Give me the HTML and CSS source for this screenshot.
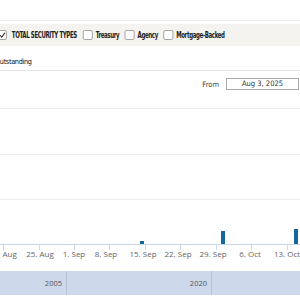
FILE: index.html
```html
<!DOCTYPE html>
<html lang="en">
<head>
    <meta charset="UTF-8">
    <title>Outstanding</title>
    <link rel="stylesheet" href="styles.css">
</head>
<body>
    <div class="topbar"></div>
    <div class="filters">
        <div class="filters-row">
            <label class="opt opt-first"><span class="box"><svg width="10" height="8" viewBox="0 0 10 8"><path d="M2 4.2 L4.3 6.2 L8.5 1.8" fill="none" stroke="#333" stroke-width="1.3"/></svg></span>TOTAL SECURITY TYPES</label>
            <label class="opt"><span class="box"></span>Treasury</label>
            <label class="opt"><span class="box"></span>Agency</label>
            <label class="opt"><span class="box"></span>Mortgage-Backed</label>
        </div>
    </div>
    <div class="title">Outstanding</div>
    <div class="range">
        <span class="range-label">From</span>
        <span class="range-input">Aug 3, 2025</span>
    </div>
    <svg class="chart" width="300" height="170" viewBox="0 0 300 170">
        <g stroke="#ececec" stroke-width="1">
            <line x1="0" y1="16.5" x2="300" y2="16.5"/>
            <line x1="0" y1="62.5" x2="300" y2="62.5"/>
            <line x1="0" y1="107.5" x2="300" y2="107.5"/>
        </g>
        <line x1="0" y1="152.5" x2="300" y2="152.5" stroke="#ccd6eb"/>
        <g stroke="#ccd6eb">
            <line x1="3.5" y1="152" x2="3.5" y2="158"/>
            <line x1="39.5" y1="152" x2="39.5" y2="158"/>
            <line x1="74.5" y1="152" x2="74.5" y2="158"/>
            <line x1="109.5" y1="152" x2="109.5" y2="158"/>
            <line x1="145.5" y1="152" x2="145.5" y2="158"/>
            <line x1="180.5" y1="152" x2="180.5" y2="158"/>
            <line x1="216.5" y1="152" x2="216.5" y2="158"/>
            <line x1="251.5" y1="152" x2="251.5" y2="158"/>
            <line x1="287.5" y1="152" x2="287.5" y2="158"/>
        </g>
        <g fill="#14689c">
            <rect x="140" y="149" width="4" height="3"/>
            <rect x="221" y="139" width="4" height="13"/>
            <rect x="294" y="137" width="4" height="15"/>
        </g>
        <g class="axis-label" text-anchor="middle">
            <text x="3" y="165">18. Aug</text>
            <text x="40" y="165">25. Aug</text>
            <text x="74" y="165">1. Sep</text>
            <text x="106" y="165">8. Sep</text>
            <text x="143" y="165">15. Sep</text>
            <text x="178" y="165">22. Sep</text>
            <text x="213" y="165">29. Sep</text>
            <text x="250" y="165">6. Oct</text>
            <text x="287" y="165">13. Oct</text>
        </g>
    </svg>
    <div class="navigator">
        <div class="nav-cell nav-a">2005</div>
        <div class="nav-cell nav-b">2020</div>
        <div class="nav-cell nav-c"></div>
    </div>
</body>
</html>
```
FILE: styles.css
```css
body {
    margin: 0;
    width: 300px;
    height: 300px;
    overflow: hidden;
    background: #fff;
    font-family: 'Open Sans', sans-serif;
}
.topbar {
    height: 20px;
    border-bottom: 1px solid #ececec;
}
.filters {
    margin-top: 3px;
    height: 22px;
    background: #f5f3f0;
    display: flex;
    align-items: center;
    overflow: hidden;
}
/* the labels use a narrow face, squeeze the row to get it */
.filters-row {
    display: flex;
    align-items: center;
    white-space: nowrap;
    transform: scaleX(0.76);
    transform-origin: 0 50%;
    font-family: 'DejaVu Sans Condensed', 'Liberation Sans Narrow', sans-serif;
    font-weight: bold;
    font-size: 8px;
    letter-spacing: -0.5px;
    color: #222;
}
.opt {
    display: flex;
    align-items: center;
    margin-right: 7.2px;
}
.opt-first {
    margin-left: -4px;
    margin-right: 7.9px;
}
.box {
    width: 11px;
    height: 8px;
    border: 1px solid #999;
    border-radius: 2px;
    background: #fff;
    margin-right: 3.9px;
    display: flex;
    align-items: center;
    justify-content: center;
}
.opt-first .box {
    margin-right: 6.6px;
}
.title {
    padding: 10px 0 2px;
    line-height: 12px;
    height: 12px;
    text-indent: -5px;
    white-space: nowrap;
    font-family: 'DejaVu Sans Condensed', sans-serif;
    font-size: 7.3px;
    letter-spacing: -0.35px;
    color: #111;
    border-bottom: 1px solid #e6e6e6;
}
.range {
    margin-top: 7px;
    height: 12px;
    display: flex;
    justify-content: flex-end;
    align-items: center;
    padding-right: 1px;
    font-family: 'DejaVu Sans Condensed', sans-serif;
    font-size: 7.5px;
    color: #444;
}
.range-label {
    margin-right: 7px;
}
.range-input {
    width: 71px;
    height: 10px;
    line-height: 10px;
    border: 1px solid #aaa;
    text-align: center;
    color: #333;
}
.chart {
    display: block;
    margin-top: 2px;
}
.axis-label {
    font-family: 'Open Sans', sans-serif;
    font-size: 8px;
    fill: #666;
}
.navigator {
    margin-top: 9px;
    height: 24px;
    background: #cdd8ea;
    display: flex;
    font-size: 7.5px;
    color: #555;
}
.nav-cell {
    line-height: 24px;
    text-align: right;
    padding-right: 4px;
    border-right: 1px solid #b6c3da;
}
.nav-a {
    width: 62px;
}
.nav-b {
    width: 140px;
}
.nav-c {
    flex: 1;
    border-right: none;
}
```
